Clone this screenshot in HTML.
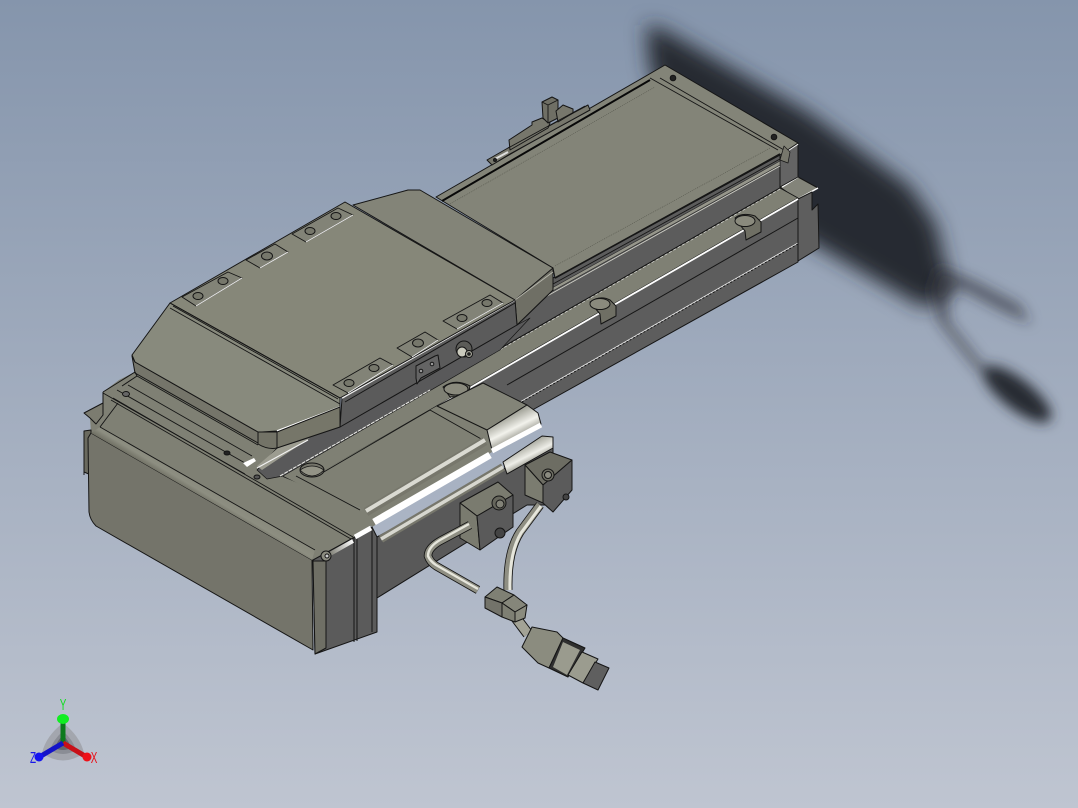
<!DOCTYPE html>
<html><head><meta charset="utf-8"><title>CAD model</title>
<style>
html,body{margin:0;padding:0;width:1078px;height:808px;overflow:hidden;background:#a0aabb}
svg{display:block}
text{font-family:"Liberation Sans",sans-serif}
</style></head><body>
<svg width="1078" height="808" viewBox="0 0 1078 808" xmlns="http://www.w3.org/2000/svg">
<defs>
<linearGradient id="bg" x1="0" y1="0" x2="0" y2="1"><stop offset="0" stop-color="#8595ac"/><stop offset="1" stop-color="#bfc5d1"/></linearGradient>
<filter id="b1" x="-30%" y="-30%" width="160%" height="160%"><feGaussianBlur stdDeviation="10"/></filter>
<filter id="b2" x="-30%" y="-30%" width="160%" height="160%"><feGaussianBlur stdDeviation="6.5"/></filter>
<linearGradient id="cyl2" gradientUnits="userSpaceOnUse" x1="505" y1="412" x2="520" y2="442"><stop offset="0" stop-color="#85867a"/><stop offset=".55" stop-color="#f2f2ec"/><stop offset="1" stop-color="#77776c"/></linearGradient>
<linearGradient id="cyl3" gradientUnits="userSpaceOnUse" x1="520" y1="442" x2="532" y2="466"><stop offset="0" stop-color="#8a8b7f"/><stop offset=".6" stop-color="#eeeee8"/><stop offset="1" stop-color="#77776c"/></linearGradient>
<linearGradient id="edge" gradientUnits="userSpaceOnUse" x1="206" y1="488" x2="200" y2="498"><stop offset="0" stop-color="#8a8b7e"/><stop offset=".45" stop-color="#8d8e81"/><stop offset="1" stop-color="#6f6f63"/></linearGradient>
<linearGradient id="whi" gradientUnits="userSpaceOnUse" x1="328" y1="553" x2="353" y2="540"><stop offset="0" stop-color="#7a7a70"/><stop offset="1" stop-color="#fff"/></linearGradient>
</defs>
<rect width="1078" height="808" fill="url(#bg)"/>

<!-- shadow -->
<g fill="#282b31">
<path filter="url(#b1)" d="M646 24 L664 30 L808 112 L910 186 L936 224 L946 266 L950 294 L924 308 L820 248 L700 180 L650 70Z"/>
<g filter="url(#b2)">
<path d="M938 266 L972 279 L1020 304 L1031 324 L1003 312 L958 288 L947 300 L950 322 L988 370 L978 372 L938 322 L930 290Z" opacity=".55"/>
<ellipse cx="1017" cy="394" rx="42" ry="15" transform="rotate(38 1017 394)" opacity="1"/>
</g>
</g>

<g stroke="#151515" stroke-width="1" stroke-linejoin="round">
<!-- lower rail -->
<path d="M780 188 L798 198 L798 262 L527 413 L300 500 L300 484Z" fill="#5d5d5d"/>
<path d="M798 218 L507 385" fill="none"/>
<path d="M798 243 L520 402" fill="none" stroke="#e8e8e8"/>
<path d="M798 244 L520 403" fill="none" stroke-dasharray="2 2"/>
<!-- right end -->
<path d="M780 187 L798 177 L818 188 L798 200Z" fill="#83847a"/>
<path d="M782 187 L798 177" stroke="#fff" fill="none" stroke-width="1.5"/>
<path d="M798 199 L818 188" stroke="#fff" fill="none" stroke-width="1.5"/>
<path d="M798 199 L812 192 L812 210 L818 204 L819 248 L798 261Z" fill="#5e5e5e"/>
<!-- upper rail: dark side -->
<path d="M517 326 L553 278 L780 154 L780 188 L500 350 L430 392Z" fill="#5c5c5c"/>
<!-- ledge top -->
<path d="M780 188 L798 198 L473 385 L300 485 L280 475Z" fill="#7f8074"/>
<path d="M780 188 L280 475" fill="none"/>
<path d="M780 189 L430 390" fill="none" stroke="#d6d6d2" stroke-width=".8" stroke-dasharray="3 2"/>
<path d="M798 199 L473 386" fill="none" stroke="#fff" stroke-width="1.8"/>
<!-- rail end cap -->
<path d="M780 155 L798 143 L798 177 L780 187Z" fill="#646464"/>
<path d="M781 155 L798 144" fill="none" stroke="#f2f2f2" stroke-width="1.4"/>
<!-- top plate -->
<path d="M436 197 L665 65 L798 143 L780 155 L555 278 L553 268Z" fill="#838478"/>
<path d="M442 201 L650 80" fill="none" stroke="#080808" stroke-width="2"/>
<path d="M650 78 L778 150 M660 78 L784 150" fill="none" stroke-width=".9"/>
<path d="M450 204 L655 87 M555 266 L770 148" fill="none" stroke="#55564c" stroke-width=".6" stroke-dasharray="1 1"/>
<path d="M555 278 L780 154" fill="none" stroke-width="1.6"/>
<path d="M553 284 L780 159" fill="none" stroke-width=".9"/>
<path d="M552 288 L780 161 L780 165 L540 298Z" fill="#96968b" stroke="#2a2a2a" stroke-width=".6"/>
<path d="M540 300 L780 166" fill="none" stroke="#cfcfc7" stroke-width=".9"/>
<path d="M784 146 L790 152 L788 163 L780 160Z" fill="#77776c" stroke-width=".7"/>
<circle cx="673" cy="78" r="2.8" fill="#222" /><circle cx="774" cy="137" r="2.8" fill="#222"/>
<!-- rear slider -->
<path d="M487 160 L508 148 L588 105 L590 110 L510 154 L492 165Z" fill="#77776c"/>
<path d="M495 159 L508 152" stroke="#ddd" stroke-width="2" fill="none"/>
<circle cx="495" cy="160" r="1.5" fill="#222"/>
<path d="M509 140 L532 125 L532 122 L542 118 L550 123 L548 128 L510 150Z" fill="#77776c"/>
<path d="M542 102 L552 97 L558 100 L558 118 L548 123 L543 118Z" fill="#6f6f65"/>
<path d="M548 105 L548 123 M542 102 L548 105 L558 100" fill="none" stroke-width=".9"/>
<path d="M556 111 L563 105 L573 109 L573 113 L558 122Z" fill="#77776c"/>
<path d="M510 147 L585 106" fill="none" stroke-width=".9"/>
<!-- notches -->
<path d="M735 218 Q742 212 755 216 L761 222 L761 232 L746 240 L745 231 Q739 224 735 218Z" fill="#6f6f64"/>
<ellipse cx="745" cy="221" rx="10" ry="5.5" fill="#8a8a7d"/>
<path d="M590 302 Q600 295 610 300 L616 306 L616 316 L601 324 L600 314Z" fill="#6f6f64"/>
<ellipse cx="600" cy="304" rx="10" ry="5.5" fill="#8a8a7d"/>

<!-- slab between box and carriage (backing) -->
<path d="M84 413 L103 403 L103 392 L119 380 L135 372 L135 362 L258 432 L278 448 L283 477 L360 508 L372 525 L353 538 L312 560 L91 433 L90 418Z" fill="#7f8074" stroke="none"/>

<!-- channel under carriage -->
<path d="M277 448 L340 427 L517 325 L530 318 L500 350 L283 476 L267 479 L257 470Z" fill="#59595a" stroke-width=".7"/>
<path d="M257 466 L278 448 L310 438 L262 470Z" fill="#9c9c90" stroke="none"/>
<path d="M257 468 L308 440" fill="none" stroke="#f2f2f2" stroke-width="1.2"/>
<path d="M280 476 L430 390" fill="none" stroke="#e8e8e4" stroke-width="1.1" stroke-dasharray="4 1"/>

<!-- carriage back -->
<path d="M353 205 L408 190 L420 190 L553 268 L553 290 L517 325 L515 300Z" fill="#838478"/>
<path d="M515 300 L553 268 L553 290 L517 325Z" fill="#6f6f65"/>
<path d="M515 300 L553 272" fill="none" stroke="#b5b5ab"/>
<!-- carriage side -->
<path d="M342 398 L515 300 L517 325 L340 427Z" fill="#5b5b5b"/>
<path d="M342 398 L515 300" fill="none" stroke="#f0f0f0" stroke-width="1.6"/>
<path d="M345 402 L515 303" fill="none"/>
<path d="M416 378 L416 366 L435 356 L438 355 L440 368 L421 378 L417 384Z" fill="#646464"/>
<circle cx="421" cy="371" r="1.8" fill="#999"/><circle cx="432" cy="364" r="1.8" fill="#999"/>
<!-- grease nipple -->
<circle cx="464" cy="349" r="8" fill="#5c5c58"/>
<circle cx="462" cy="352" r="5" fill="#c9c9bc"/>
<circle cx="469" cy="354" r="3.5" fill="#a8a89c"/>
<circle cx="469" cy="354" r="1.3" fill="#333"/>
<!-- carriage top plate -->
<path d="M345 202 L515 300 L340 398 L170 303Z" fill="#868779"/>
<!-- front lip -->
<path d="M132 356 L135 362 L258 432 L258 443 L135 373Z" fill="#75756a"/>
<!-- front slope -->
<path d="M170 303 L340 398 L340 407 L277 431 L262 432 L258 432 L135 362 L132 355Z" fill="#888a7d"/>
<path d="M170 303 L340 398 M170 308 L340 404 M173 306 L338 399" fill="none" stroke-width=".9"/>
<path d="M277 431 L340 407" fill="none" stroke="#fff" stroke-width="1.6"/>
<path d="M340 407 L340 427 L277 448 L277 432Z" fill="#767669"/>
<path d="M258 432 L277 432 L277 448 Q268 450 258 444Z" fill="#737367"/>
<!-- pads -->
<g fill="#828377" stroke-width=".9">
<path d="M182 297 L228 272 L242 278 L196 306Z"/>
<path d="M246 260 L275 244 L288 252 L260 268Z"/>
<path d="M292 234 L338 208 L353 215 L306 242Z"/>
<path d="M333 385 L380 358 L393 365 L348 393Z"/>
<path d="M397 348 L425 332 L438 340 L412 357Z"/>
<path d="M443 321 L490 295 L503 303 L457 329Z"/>
</g>
<path d="M196 306 L242 278 M260 268 L288 252 M306 242 L353 215 M348 393 L393 365 M412 357 L438 340 M457 329 L503 303" stroke="#eee" fill="none" stroke-width="1"/>
<g fill="#76776b">
<ellipse cx="198" cy="296" rx="5" ry="3.5"/><ellipse cx="223" cy="281" rx="5" ry="3.5"/>
<ellipse cx="267" cy="256" rx="5.5" ry="4"/>
<ellipse cx="310" cy="231" rx="5" ry="3.5"/><ellipse cx="336" cy="216" rx="5" ry="3.5"/>
<ellipse cx="349" cy="383" rx="5" ry="3.5"/><ellipse cx="374" cy="368" rx="5" ry="3.5"/>
<ellipse cx="418" cy="343" rx="5.5" ry="4"/>
<ellipse cx="462" cy="318" rx="5" ry="3.5"/><ellipse cx="487" cy="303" rx="5" ry="3.5"/>
</g>

<!-- rear block lines -->
<path d="M84 413 L103 403 L103 415 L96 424 L90 418Z" fill="#7c7c70"/>
<path d="M103 392 L103 404 M103 392 L119 382 L135 372 L137 376 L122 386" fill="none"/>
<path d="M103 393 L245 474 M117 390 L245 463 M128 385 L252 456 M137 376 L258 445" fill="none" stroke-width=".9"/>
<path d="M113 398 L353 537 M111 400 L351 539" fill="none" stroke-width=".9"/>
<path d="M100 427 L118 403" fill="none" stroke-width=".9"/>
<ellipse cx="126" cy="394" rx="3.5" ry="2.5" fill="#666"/>
<ellipse cx="227" cy="453" rx="3" ry="2" fill="#222"/>
<ellipse cx="257" cy="477" rx="3" ry="2" fill="#555"/>
<path d="M243 463 L254 458 L256 461 L247 467Z" fill="#fff" stroke="none"/>
<path d="M84 431 L91 430 L91 475 L84 472Z" fill="#6a6a5f"/>

<!-- motor top -->
<path d="M283 478 L300 484 L437 406 L483 383 L487 430 L492 452 L372 527 L360 508Z" fill="#7f8074" stroke="none"/>
<path d="M296 476 L360 510 M322 473 L430 410 L483 440" fill="none" stroke-width=".9"/>
<path d="M473 386 L438 406" fill="none" stroke="#fff" stroke-width="1.6"/>
<!-- hole at the ledge -->
<path d="M443 387 Q455 378 470 386 L468 396 L450 397Z" fill="#6f6f64"/>
<ellipse cx="456" cy="389" rx="12" ry="6" fill="#8a8a7d"/>
<!-- hole -->
<ellipse cx="312" cy="470" rx="12" ry="7" fill="#74746a"/>
<path d="M300 470 Q312 482 324 470 Q312 462 300 470Z" fill="#939386" stroke-width=".8"/>
<!-- motor dark side -->
<path d="M377 537 L553 442 L553 505 L527 505 L377 598Z" fill="#595959"/>
<!-- bands -->
<g fill="none" stroke-linecap="butt">
<path d="M366 512 L485 441" stroke="#77776c" stroke-width="9"/>
<path d="M366 511 L485 440" stroke="#dadad2" stroke-width="4" />
<path d="M374 522 L490 455" stroke="#fff" stroke-width="7"/>
<path d="M381 539 L503 467" stroke="#77776c" stroke-width="8"/>
<path d="M381 539 L503 467" stroke="#d7d7cf" stroke-width="3.5"/>
</g>
<!-- end block -->
<path d="M437 406 L483 383 L527 405 L487 430Z" fill="#838478"/>
<path d="M487 430 L527 405 L538 413 L541 424 L492 450Z" fill="url(#cyl2)"/>
<path d="M503 462 L542 436 L553 437 L553 448 L507 474Z" fill="url(#cyl3)"/>
<path d="M492 451 L541 425" stroke="#fff" stroke-width="5" fill="none"/>

<!-- end plates -->
<path d="M313 560 L353 538 L372 527 L377 537 L377 632 L315 654Z" fill="#5b5b5b"/>
<path d="M313 561 L326 561 L326 648 L315 654Z" fill="#6f6f65"/>
<path d="M354 537 L354 642 M357 536 L357 641 M372 528 L372 632" fill="none"/>
<path d="M330 554 L353 541" stroke="url(#whi)" stroke-width="4" fill="none"/>
<path d="M355 537 L371 528" stroke="#fff" stroke-width="5" fill="none"/>
<circle cx="326" cy="556" r="5" fill="#8c8c80"/><circle cx="327" cy="556" r="2" fill="#ccc"/>
<!-- big box front -->
<path d="M91 433 L312 560 L313 650 L96 526 Q90 520 89 512 L88 438Z" fill="#74746a"/>
<path d="M91 433 L100 427 L315 550 L312 560Z" fill="url(#edge)" stroke="none"/>
<path d="M100 427 L315 550" fill="none" stroke-width=".9"/>
<path d="M84 431 L84 475" fill="none"/>

<!-- connector block 1 -->
<path d="M460 503 L498 482 L513 495 L477 516Z" fill="#7a7b6f"/>
<path d="M460 503 L477 516 L480 550 L460 538Z" fill="#7a7b6f"/>
<path d="M477 516 L513 495 L513 527 L480 550Z" fill="#5a5a5a"/>
<ellipse cx="499" cy="503" rx="7" ry="7" fill="#66665c"/>
<circle cx="500" cy="504" r="4" fill="#828277"/>
<circle cx="500" cy="533" r="5" fill="#444"/>
<!-- block 2 -->
<path d="M525 465 L550 452 L572 460 L543 485Z" fill="#6d6d63"/>
<path d="M543 485 L572 460 L572 490 L553 512 L543 503Z" fill="#5b5b5b"/>
<path d="M525 465 L543 485 L543 503 L525 495Z" fill="#7b7c70"/>
<circle cx="548" cy="475" r="6" fill="#6e6e63"/>
<circle cx="548" cy="475" r="3.5" fill="#8b8b80"/>
<circle cx="566" cy="497" r="3" fill="#444"/>

<!-- cables -->
<g fill="none">
<path d="M470 525 L440 541 Q428 548 428 556 Q430 562 436 566 L478 590" stroke="#141414" stroke-width="8.5"/>
<path d="M470 525 L440 541 Q428 548 428 556 Q430 562 436 566 L478 590" stroke="#8f8f83" stroke-width="6.8"/>
<path d="M469 524 L440 540 Q428 547 428 556 Q430 561 436 565 L478 589" stroke="#e6e6dc" stroke-width="2.4"/>
<path d="M540 505 L520 532 Q507 552 508 590" stroke="#141414" stroke-width="9"/>
<path d="M540 505 L520 532 Q507 552 508 590" stroke="#8f8f83" stroke-width="7.4"/>
<path d="M541 506 L521 533 Q509 553 510 590" stroke="#e6e6dc" stroke-width="3"/>
<path d="M516 618 L528 634" stroke="#141414" stroke-width="11"/>
<path d="M516 618 L528 634" stroke="#a3a396" stroke-width="9"/>
</g>
<!-- small connector -->
<path d="M485 597 L497 587 L514 595 L502 603Z" fill="#7f8074"/>
<path d="M502 603 L514 595 L527 605 L515 612Z" fill="#85867a"/>
<path d="M485 597 L502 603 L502 617 L485 608Z" fill="#73736a"/>
<path d="M502 603 L515 612 L515 622 L502 617Z" fill="#7e7f73"/>
<path d="M515 612 L527 605 L525 618 L515 622Z" fill="#8a8b7e"/>
<!-- plug -->
<path d="M522 647 L532 627 L557 632 L563 638 L549 668 L538 663Z" fill="#8b8c7f"/>
<path d="M563 638 L585 648 L568 677 L549 668Z" fill="#2f2f2f"/>
<path d="M563 642 L580 650 L567 675 L553 667Z" fill="#9a9b8e" stroke="none"/>
<path d="M582 652 L598 659 L583 683 L568 675Z" fill="#9b9c8f"/>
<path d="M595 662 L609 668 L598 690 L583 683Z" fill="#5f5f5f"/>
</g>

<!-- triad -->
<path d="M63 723 Q80 736 84 753 Q63 768 42 753 Q46 736 63 723Z" fill="#a3a6ae"/>
<path d="M63 731 Q73 740 76 750 Q63 758 50 750 Q53 740 63 731Z" fill="#8a8d95"/>
<path d="M63 735 Q69 741 71 748 Q63 752 55 748 Q57 741 63 735Z" fill="#64676e"/>
<rect x="60.5" y="720" width="5" height="23" fill="#0c7a1c"/>
<ellipse cx="63" cy="719" rx="6" ry="5" fill="#11ee22"/>
<path d="M63 743 L85 756" stroke="#c81018" stroke-width="5"/>
<circle cx="87" cy="757" r="4.5" fill="#ee1018"/>
<path d="M63 743 L41 756" stroke="#1414c8" stroke-width="5"/>
<circle cx="39" cy="757" r="4.5" fill="#1414f0"/>
<text transform="translate(63 710) scale(.62 1)" font-size="16" fill="#12dd22" text-anchor="middle">Y</text>
<text transform="translate(94 763) scale(.62 1)" font-size="16" fill="#e81018" text-anchor="middle">X</text>
<text transform="translate(33 763) scale(.62 1)" font-size="16" fill="#1818e8" text-anchor="middle">Z</text>
</svg>
</body></html>
